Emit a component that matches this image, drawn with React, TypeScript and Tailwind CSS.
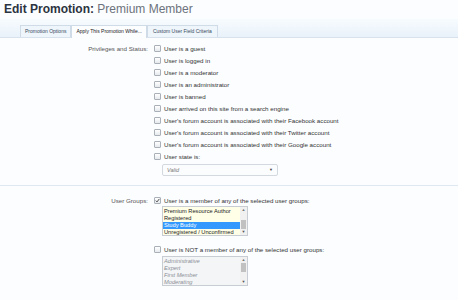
import React from 'react';

const font = { fontFamily: '"Liberation Sans", Arial, sans-serif' };

const Check: React.FC<{ checked?: boolean }> = ({ checked }) => (
    <span className="mt-[1px] flex h-[7px] w-[7px] shrink-0 items-center justify-center rounded-[1px] border border-[#a9b0b8] bg-gradient-to-b from-[#ffffff] to-[#e6e9ed]">
        {checked && (
            <svg viewBox="0 0 8 8" className="h-[7px] w-[7px]">
                <path d="M1.2 4.2 L3.2 6.2 L7 1.4" fill="none" stroke="#333" strokeWidth="1.4" />
            </svg>
        )}
    </span>
);

const Option: React.FC<{ label: string; checked?: boolean }> = ({ label, checked }) => (
    <label className="flex h-[12px] items-start gap-[3px] text-[6.2px] leading-[9px] text-[#333]">
        <Check checked={checked} />
        <span>{label}</span>
    </label>
);

const ListBox: React.FC<{ items: string[]; selected?: number; disabled?: boolean }> = ({ items, selected, disabled }) => (
    <div className={`ml-[8px] mt-[2px] flex h-[30px] w-[86px] border border-[#c8cdd3] ${disabled ? 'bg-[#f4f5f6]' : 'bg-[#ffffe8]'}`}>
        <div className="flex-1 overflow-hidden pt-[1px]">
            {items.map((it, i) => (
                <div
                    key={it}
                    className={`h-[7px] pl-[1px] text-[5.7px] leading-[7px] ${
                        i === selected ? 'bg-[#3399ff] text-white' : disabled ? 'italic text-[#8a8f96]' : 'text-[#222]'
                    }`}
                >
                    {it}
                </div>
            ))}
        </div>
        <div className="flex w-[7px] flex-col items-center justify-between bg-[#f1f1f1] py-[1px]">
            <span className="text-[4px] leading-[4px] text-[#777]">▲</span>
            <span className={`h-[9px] w-[5px] ${disabled ? 'bg-[#c1c1c1] -mt-[8px]' : 'bg-[#c1c1c1] mt-[6px]'}`} />
            <span className="text-[4px] leading-[4px] text-[#555]">▼</span>
        </div>
    </div>
);

export default function App() {
    const privileges = [
        'User is a guest',
        'User is logged in',
        'User is a moderator',
        'User is an administrator',
        'User is banned',
        'User arrived on this site from a search engine',
        "User's forum account is associated with their Facebook account",
        "User's forum account is associated with their Twitter account",
        "User's forum account is associated with their Google account",
        'User state is:',
    ];

    return (
        <div className="h-[300px] w-[458px] overflow-hidden bg-[#fcfdff]" style={font}>
            <h1 className="px-[4px] pt-[2px] text-[12px] leading-[15px] font-bold text-[#2b3440]">
                Edit Promotion: <span className="font-normal text-[#6c737c]">Premium Member</span>
            </h1>

            <div className="mt-[2px] flex h-[19px] items-end border-b border-[#d7e2ec] bg-gradient-to-b from-[#f7fbfe] to-[#e9f2fa] pl-[20px]">
                <div className="flex h-[12px] items-center border border-b-0 border-[#cfdbe6] bg-[#eef5fb] px-[4px] text-[5px] text-[#3a4a5c]">
                    Promotion Options
                </div>
                <div className="-mb-px flex h-[13px] items-center border border-b-0 border-[#cfdbe6] bg-[#fcfdff] px-[4px] text-[5px] text-[#222]">
                    Apply This Promotion While...
                </div>
                <div className="flex h-[12px] items-center border border-b-0 border-[#cfdbe6] bg-[#eef5fb] px-[5px] text-[5px] text-[#3a4a5c]">
                    Custom User Field Criteria
                </div>
            </div>

            <div className="flex pt-[6px]">
                <div className="w-[154px] pr-[6px] text-right text-[6.2px] leading-[9px] text-[#555]">Privileges and Status:</div>
                <div className="flex flex-col">
                    {privileges.map(p => (
                        <Option key={p} label={p} />
                    ))}
                    <div className="ml-[8px] flex h-[12px] w-[116px] items-center justify-between rounded-[2px] border border-[#d4d9df] bg-[#fbfcfd] px-[4px] text-[5.5px] text-[#777]">
                        <span className="italic">Valid</span>
                        <span className="text-[4px] text-[#444]">▼</span>
                    </div>
                </div>
            </div>

            <div className="mt-[9px] h-[1px] bg-[#dde8f2]" />

            <div className="flex pt-[10px]">
                <div className="w-[154px] pr-[6px] text-right text-[6.2px] leading-[9px] text-[#555]">User Groups:</div>
                <div className="flex flex-col">
                    <Option label="User is a member of any of the selected user groups:" checked />
                    <div className="-mt-[4px]">
                        <ListBox items={['Premium Resource Author', 'Registered', 'Study Buddy', 'Unregistered / Unconfirmed']} selected={2} />
                    </div>
                    <div className="mt-[9px]">
                        <Option label="User is NOT a member of any of the selected user groups:" />
                    </div>
                    <div className="-mt-[3px]">
                        <ListBox items={['Administrative', 'Expert', 'First Member', 'Moderating']} disabled />
                    </div>
                </div>
            </div>
        </div>
    );
}
